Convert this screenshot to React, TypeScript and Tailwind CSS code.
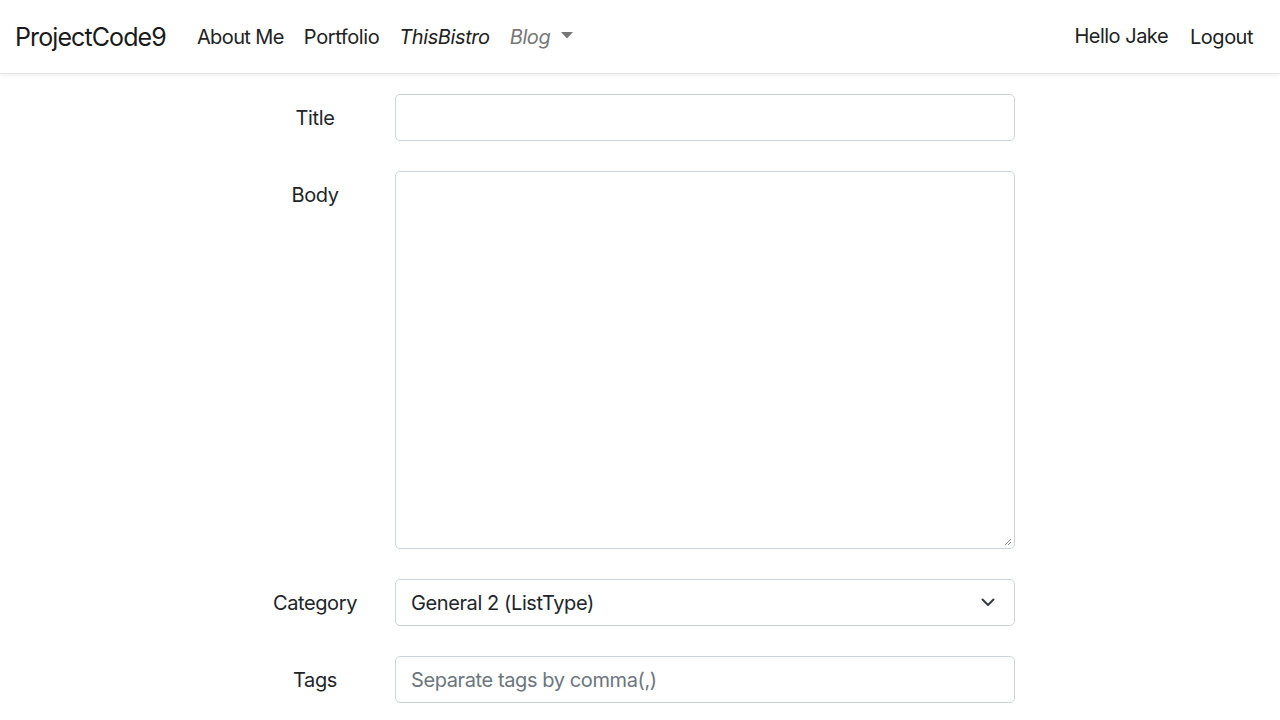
import React from "react";

export default function App() {
  const font = { fontFamily: "Inter, 'Liberation Sans', sans-serif" };
  return (
    <div className="min-h-[720px] bg-white text-[#212529]" style={font}>
      <nav className="flex h-[74px] items-center border-b border-[#e2e2e2] bg-white pl-[15px] pr-[27px] pt-[1px] shadow-[0_2px_5px_rgba(0,0,0,0.05)]">
        <span className="mr-[21px] text-[25px] leading-none tracking-[-0.9px] text-[#1a1a1a]">ProjectCode9</span>
        <div className="flex items-center text-[20px] leading-none tracking-[-0.4px] text-[#222]">
          <span className="px-[10px] tracking-[-0.6px]">About Me</span>
          <span className="px-[10px]">Portfolio</span>
          <span className="px-[10px] italic">ThisBistro</span>
          <span className="flex items-center gap-[11px] px-[10px] italic text-[#777]">
            Blog
            <svg width="12" height="7" viewBox="0 0 12 7" className="mt-[-4px]">
              <path d="M0 0h12L6 6.5z" fill="#777" />
            </svg>
          </span>
        </div>
        <div className="ml-auto flex items-center gap-[22px] text-[20px] leading-none tracking-[-0.5px] text-[#222]">
          <span className="mt-[-3px]">Hello Jake</span>
          <span>Logout</span>
        </div>
      </nav>

      <div className="mx-auto mt-[20px] grid w-[770px] grid-cols-[120px_620px] gap-x-[20px] gap-y-[30px] pr-[10px] text-[20px] leading-[30px] tracking-[-0.4px]">
        <label className="pt-[9px] text-center">Title</label>
        <div className="h-[47px] rounded-[5px] border border-[#ced4da] bg-white" />

        <label className="pt-[9px] text-center">Body</label>
        <div className="relative h-[378px] rounded-[5px] border border-[#ced4da] bg-white">
          <svg width="8" height="8" viewBox="0 0 8 8" className="absolute bottom-[2px] right-[2px]">
            <path d="M7 1L1 7M7 4L4 7" stroke="#888" strokeWidth="1" />
          </svg>
        </div>

        <label className="pt-[9px] text-center">Category</label>
        <div className="flex h-[47px] items-center justify-between rounded-[5px] border border-[#ced4da] bg-white pl-[15px] pr-[19px]">
          <span className="text-[#212529]">General 2 (ListType)</span>
          <svg width="14" height="9" viewBox="0 0 14 9">
            <path d="M1.5 1.5L7 7l5.5-5.5" fill="none" stroke="#343a40" strokeWidth="2" strokeLinecap="round" strokeLinejoin="round" />
          </svg>
        </div>

        <label className="pt-[9px] text-center">Tags</label>
        <div className="flex h-[47px] items-center rounded-[5px] border border-[#ced4da] bg-white pl-[15px]">
          <span className="text-[#6c757d]">Separate tags by comma(,)</span>
        </div>
      </div>
    </div>
  );
}
